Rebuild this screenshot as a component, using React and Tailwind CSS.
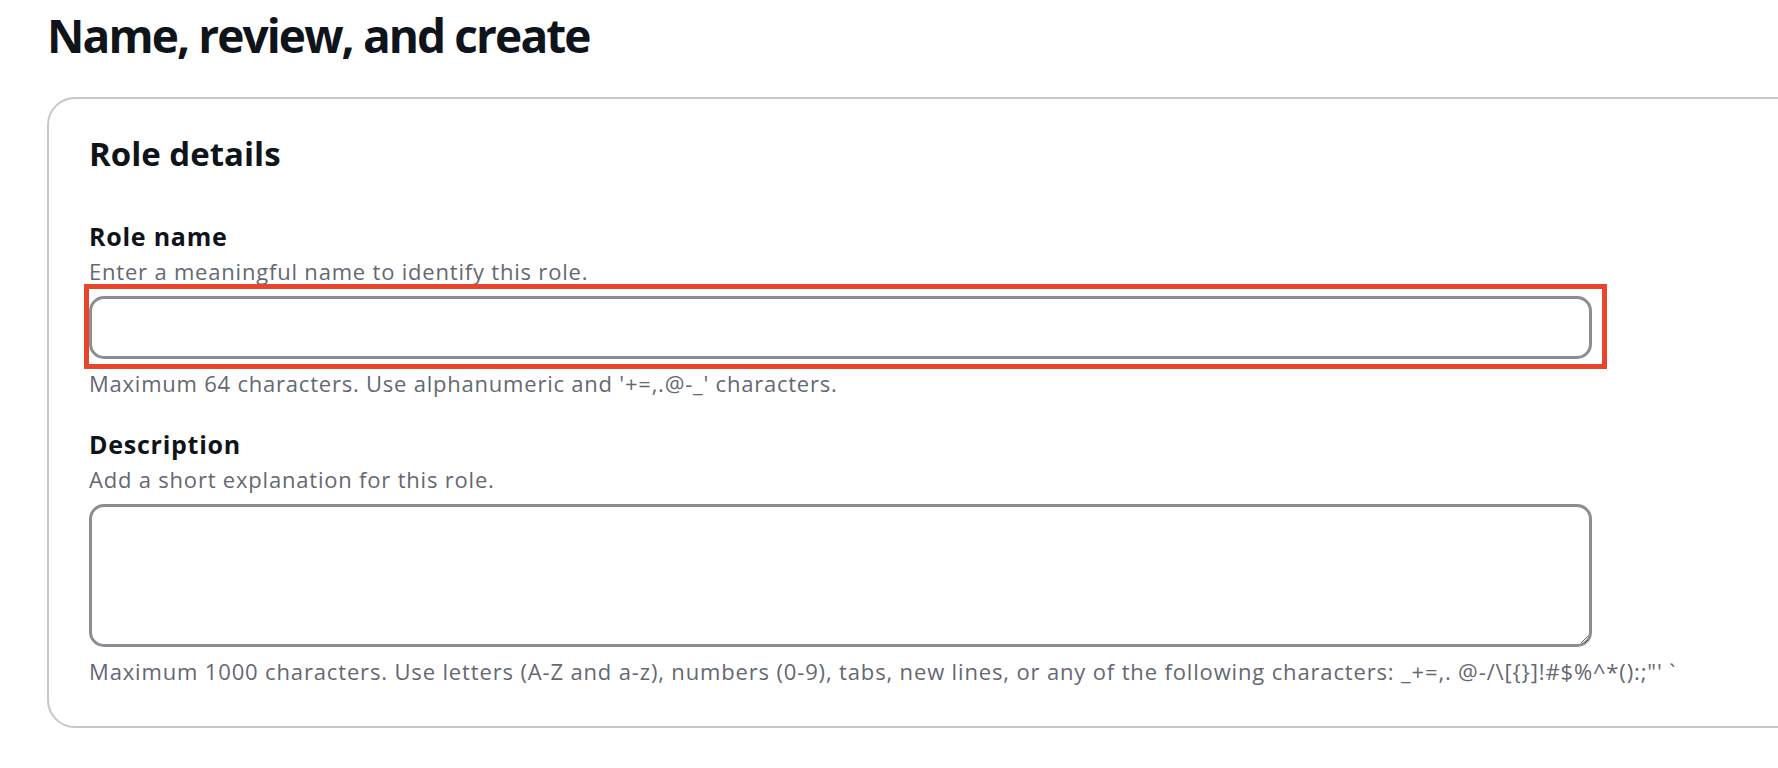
export default function App() {
  const font = { fontFamily: '"Open Sans", "Noto Sans", sans-serif' };
  return (
    <div className="w-[1778px] h-[768px] overflow-hidden bg-white text-[#0f141a]" style={font}>
      <h1 className="pl-[47px] pt-[7px] text-[46px] leading-[56px] font-bold tracking-[-1.9px]">
        Name, review, and create
      </h1>
      <div className="flex pl-[47px] mt-[34px]">
        <div className="shrink-0 w-[1800px] border-2 border-[#c6c6cd] rounded-[28px] pl-[40px] pt-[35px] pb-[41px]">
          <h2 className="text-[33px] leading-[40px] font-bold tracking-[0px]">Role details</h2>

          <div className="mt-[47px] text-[25px] leading-[30px] font-bold tracking-[0.75px]">Role name</div>
          <div className="mt-[6px] text-[22px] leading-[28px] tracking-[0.8px] text-[#656871]">
            Enter a meaningful name to identify this role.
          </div>
          <div className="relative mt-[11px] w-[1503px]">
            <input
              type="text"
              className="block w-full h-[63px] border-[3px] border-[#8c8c94] rounded-[15px] bg-white outline-none"
            />
            <div className="absolute left-[-5px] top-[-12px] right-[-15px] bottom-[-10px] border-[5px] border-[#e8462c] pointer-events-none" />
          </div>
          <div className="mt-[10px] text-[22px] leading-[28px] tracking-[0.78px] text-[#656871]">
            Maximum 64 characters. Use alphanumeric and '+=,.@-_' characters.
          </div>

          <div className="mt-[32px] text-[25px] leading-[30px] font-bold tracking-[0.75px]">Description</div>
          <div className="mt-[6px] text-[22px] leading-[28px] tracking-[0.8px] text-[#656871]">
            Add a short explanation for this role.
          </div>
          <textarea
            className="block mt-[11px] w-[1503px] h-[143px] border-[3px] border-[#8c8c94] rounded-[15px] bg-white outline-none"
          />
          <div className="mt-[10px] text-[22px] leading-[28px] tracking-[0.85px] text-[#656871] whitespace-pre">
            {"Maximum 1000 characters. Use letters (A-Z and a-z), numbers (0-9), tabs, new lines, or any of the following characters: _+=,. @-/\\[{}]!#$%^*():;\"' `"}
          </div>
        </div>
      </div>
    </div>
  );
}
